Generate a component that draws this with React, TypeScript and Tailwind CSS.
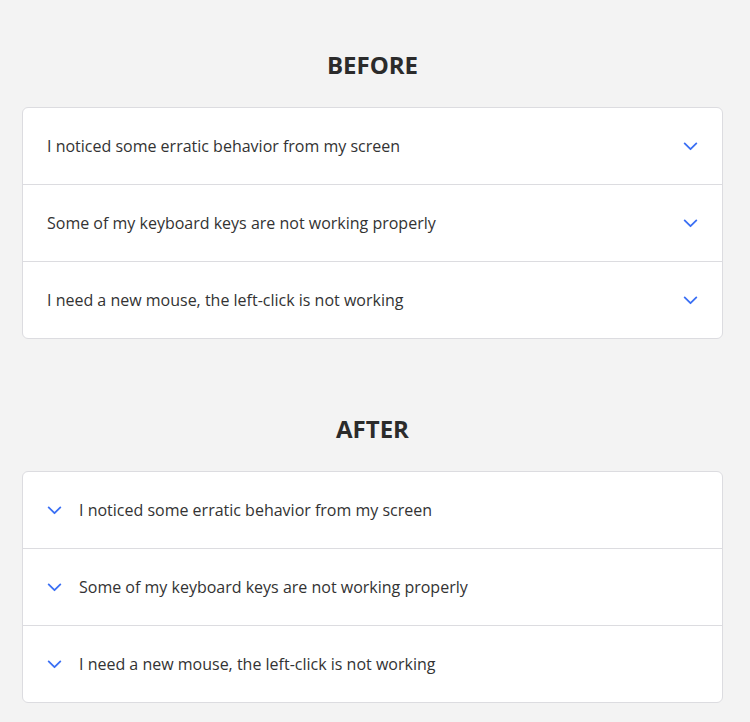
import React from "react";

const questions = [
  "I noticed some erratic behavior from my screen",
  "Some of my keyboard keys are not working properly",
  "I need a new mouse, the left-click is not working",
];

function Chevron() {
  return (
    <svg viewBox="0 0 16 10" className="h-[9px] w-[15px] shrink-0 text-[#3a6ff4]" fill="none" stroke="currentColor" strokeWidth="2" strokeLinecap="round" strokeLinejoin="round">
      <path d="M1.5 1.5 8 8l6.5-6.5" />
    </svg>
  );
}

function Accordion({ iconFirst }: { iconFirst: boolean }) {
  return (
    <div className="overflow-hidden rounded-md border border-[#dcdce0] bg-white">
      {questions.map((q, i) => (
        <div
          key={i}
          className={`flex h-[76px] items-center px-6 text-[16px] text-[#333] ${i > 0 ? "box-content border-t border-[#dcdce0]" : ""}`}
        >
          {iconFirst ? (
            <>
              <Chevron />
              <span className="ml-[17px]">{q}</span>
            </>
          ) : (
            <>
              <span className="flex-1">{q}</span>
              <Chevron />
            </>
          )}
        </div>
      ))}
    </div>
  );
}

export default function App() {
  return (
    <div className="min-h-[722px] bg-[#f3f3f3] pt-[47px] pb-[20px] font-['Open_Sans',sans-serif]">
      <div className="mx-[22px] w-[701px]">
        <h2 className="mb-[24px] text-center text-[24px] font-bold leading-[36px] text-[#2b2b2b]">BEFORE</h2>
        <Accordion iconFirst={false} />
        <h2 className="mt-[72px] mb-[24px] text-center text-[24px] font-bold leading-[36px] text-[#2b2b2b]">AFTER</h2>
        <Accordion iconFirst={true} />
      </div>
    </div>
  );
}
